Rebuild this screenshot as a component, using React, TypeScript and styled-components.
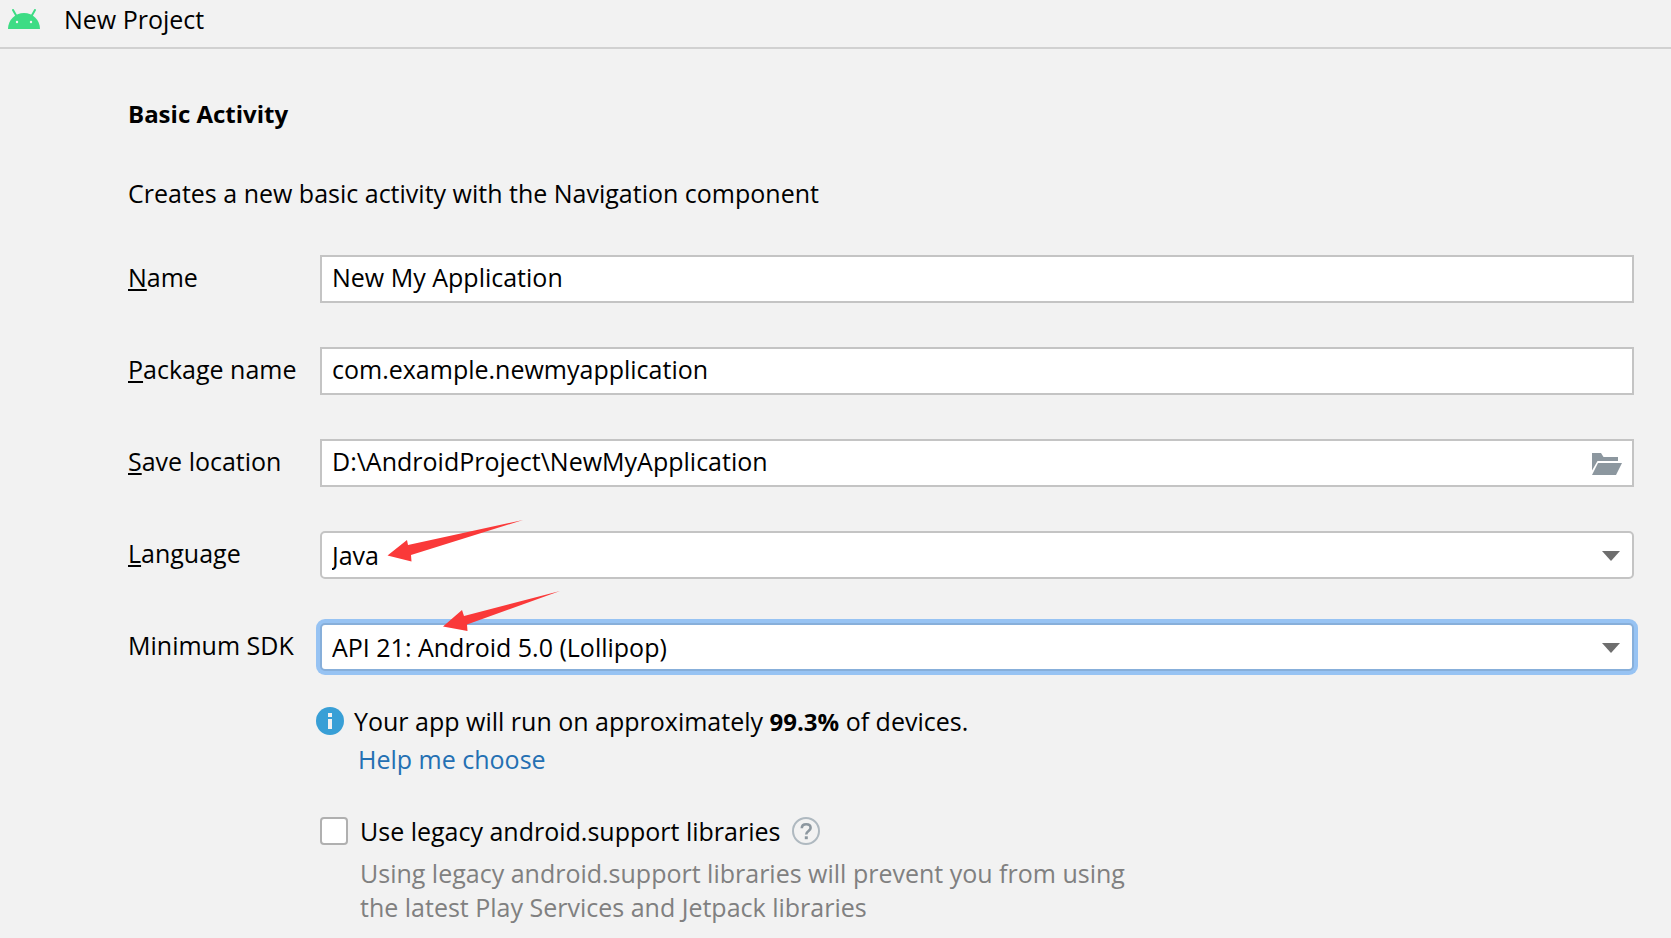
import React from "react";
import styled, { createGlobalStyle } from "styled-components";

const GlobalStyle = createGlobalStyle`
  *, *::before, *::after { box-sizing: border-box; }
  body {
    margin: 0;
    background: #f2f2f2;
    color: #000;
    font-family: "Segoe UI", "Open Sans", "Noto Sans", sans-serif;
    font-size: 25px;
    line-height: 34px;
  }
`;

const TitleBar = styled.header`
  display: flex;
  align-items: flex-start;
  gap: 24px;
  height: 49px;
  padding: 2px 8px 0;
  border-bottom: 2px solid #d1d1d1;
`;

const Logo = styled.svg`
  flex: none;
  margin-top: 7px;
`;

const Title = styled.span`
  white-space: nowrap;
`;

const Main = styled.main`
  padding: 48px 37px 14px 128px;
`;

const Heading = styled.h1`
  margin: 0 0 45px;
  font-size: 24px;
  font-weight: 700;
  line-height: 34px;
`;

const Summary = styled.p`
  margin: 0 0 45px;
`;

const Form = styled.form`
  display: grid;
  gap: 44px;
`;

const Row = styled.div`
  display: grid;
  grid-template-columns: 192px minmax(0, 1fr);
`;

const Label = styled.label`
  height: 48px;
  padding: 5px 0;
  white-space: nowrap;
`;

const Mnemonic = styled.span`
  text-decoration: underline;
  text-decoration-thickness: 2px;
  text-underline-offset: 2px;
  text-decoration-skip-ink: none;
`;

const Field = styled.div`
  position: relative;
  display: flex;
`;

const TextBox = styled.input`
  width: 100%;
  height: 48px;
  padding: 0 48px 4px 10px;
  border: 2px solid #c4c4c4;
  border-radius: 0;
  outline: none;
  background: #fff;
  color: inherit;
  font: inherit;
`;

const BrowseButton = styled.button`
  position: absolute;
  right: 12px;
  top: 12px;
  display: flex;
  padding: 0;
  border: 0;
  background: none;
`;

const Select = styled.select<{ $focused?: boolean }>`
  appearance: none;
  width: 100%;
  height: 48px;
  padding: 0 40px 0 10px;
  border: 2px solid ${(p) => (p.$focused ? "#87afda" : "#c4c4c4")};
  border-radius: 5px;
  outline: none;
  box-shadow: ${(p) => (p.$focused ? "0 0 0 4px #97c3f3" : "none")};
  background: #fff;
  color: inherit;
  font: inherit;
`;

const Chevron = styled.svg`
  position: absolute;
  right: 14px;
  top: 20px;
  pointer-events: none;
`;

const Pointer = styled.svg<{ $left: number; $top: number }>`
  position: absolute;
  left: ${(p) => p.$left}px;
  top: ${(p) => p.$top}px;
  pointer-events: none;
`;

const Details = styled.div`
  margin-left: 188px;
`;

const InfoRow = styled.div`
  display: flex;
  align-items: flex-start;
  gap: 10px;
  margin-top: 33px;
`;

const Strong = styled.b`
  font-size: 24px;
  line-height: 24px;
`;

const InfoIcon = styled.svg`
  flex: none;
  margin-top: 3px;
`;

const HelpLink = styled.a`
  display: block;
  width: fit-content;
  margin: 4px 0 38px 42px;
  color: #2470b3;
  text-decoration: none;
`;

const CheckRow = styled.div`
  display: flex;
  align-items: flex-start;
  margin-left: 4px;
`;

const CheckBox = styled.input`
  appearance: none;
  flex: none;
  width: 28px;
  height: 28px;
  margin: 3px 12px 0 0;
  border: 2px solid #b0b0b0;
  border-radius: 4px;
  background: #fff;
`;

const HelpButton = styled.button`
  display: flex;
  margin: 3px 0 0 12px;
  padding: 0;
  border: 0;
  background: none;
`;

const Note = styled.p`
  max-width: 780px;
  margin: 8px 0 0 44px;
  color: #808080;
`;

function DropArrow() {
  return (
    <Chevron width="18" height="10" viewBox="0 0 18 10" aria-hidden="true">
      <path d="M0 0H18L9 10Z" fill="#6e6e6e" />
    </Chevron>
  );
}

export default function App() {
  return (
    <>
      <GlobalStyle />
      <TitleBar>
        <Logo width="32" height="20" viewBox="0 0 32 20" aria-hidden="true">
          <path d="M5 1L9 8M27 1L23 8" stroke="#3ddc84" strokeWidth="2" strokeLinecap="round" />
          <path d="M0 20C0 11 7 4 16 4S32 11 32 20Z" fill="#3ddc84" />
          <circle cx="9" cy="13" r="1.2" fill="#f2f2f2" />
          <circle cx="23" cy="13" r="1.2" fill="#f2f2f2" />
        </Logo>
        <Title>New Project</Title>
      </TitleBar>
      <Main>
        <Heading>Basic Activity</Heading>
        <Summary>Creates a new basic activity with the Navigation component</Summary>
        <Form>
          <Row>
            <Label htmlFor="name"><Mnemonic>N</Mnemonic>ame</Label>
            <Field>
              <TextBox id="name" type="text" defaultValue="New My Application" />
            </Field>
          </Row>
          <Row>
            <Label htmlFor="package"><Mnemonic>P</Mnemonic>ackage name</Label>
            <Field>
              <TextBox id="package" type="text" spellCheck={false} defaultValue="com.example.newmyapplication" />
            </Field>
          </Row>
          <Row>
            <Label htmlFor="location"><Mnemonic>S</Mnemonic>ave location</Label>
            <Field>
              <TextBox id="location" type="text" spellCheck={false} defaultValue={"D:\\AndroidProject\\NewMyApplication"} />
              <BrowseButton type="button" aria-label="Browse">
                <svg width="32" height="24" viewBox="0 0 32 24" aria-hidden="true">
                  <path d="M2 2H11L13.500 6H28V10H7.500L2 19.500Z" fill="#8c979f" />
                  <path d="M8 12H32L26 24H2Z" fill="#8c979f" />
                </svg>
              </BrowseButton>
            </Field>
          </Row>
          <Row>
            <Label htmlFor="language"><Mnemonic>L</Mnemonic>anguage</Label>
            <Field>
              <Select id="language" defaultValue="Java">
                <option>Java</option>
                <option>Kotlin</option>
              </Select>
              <DropArrow />
              <Pointer $left={67} $top={-11} width="136" height="42" viewBox="0 0 136 42" aria-hidden="true">
                <path d="M.5 35.500L20 20L21 25L136 0L24 35L24.500 41.500Z" fill="#fa3939" />
              </Pointer>
            </Field>
          </Row>
          <Row>
            <Label htmlFor="sdk">Minimum SDK</Label>
            <Field>
              <Select id="sdk" $focused defaultValue="API 21: Android 5.0 (Lollipop)">
                <option>API 21: Android 5.0 (Lollipop)</option>
              </Select>
              <DropArrow />
              <Pointer $left={123} $top={-32} width="117" height="40" viewBox="0 0 117 40" aria-hidden="true">
                <path d="M0 35.500L19 19L21 25L117 0L24 33.500L24.500 40Z" fill="#fa3939" />
              </Pointer>
            </Field>
          </Row>
        </Form>
        <Details>
          <InfoRow>
            <InfoIcon width="28" height="28" viewBox="0 0 28 28" aria-hidden="true">
              <circle cx="14" cy="14" r="14" fill="#389fd6" />
              <path d="M12 6H16V10H12ZM12 12H16V22H12Z" fill="#f2f2f2" />
            </InfoIcon>
            <span>Your app will run on approximately <Strong>99.3%</Strong> of devices.</span>
          </InfoRow>
          <HelpLink href="#help">Help me choose</HelpLink>
          <CheckRow>
            <CheckBox id="legacy" type="checkbox" aria-describedby="legacy-note" />
            <label htmlFor="legacy">Use legacy android.support libraries</label>
            <HelpButton type="button" aria-label="Help">
              <svg width="28" height="28" viewBox="0 0 28 28" fill="none" aria-hidden="true">
                <circle cx="14" cy="14" r="13" stroke="#afb9c0" strokeWidth="2" />
                <path d="M9.800 11.200C9.800 8.700 11.600 7.300 14.200 7.300S18.600 8.700 18.600 11C18.600 14 14.200 14 14.200 17.500" stroke="#8c979f" strokeWidth="2.600" />
                <path d="M12.800 19.300H15.800V22.200H12.800Z" fill="#8c979f" />
              </svg>
            </HelpButton>
          </CheckRow>
          <Note id="legacy-note">
            Using legacy android.support libraries will prevent you from using the latest Play Services and Jetpack libraries
          </Note>
        </Details>
      </Main>
    </>
  );
}
